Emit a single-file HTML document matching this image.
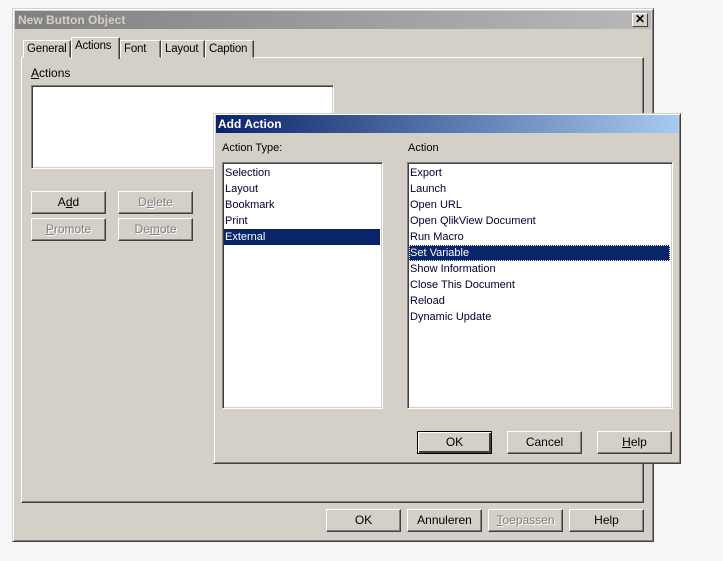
<!DOCTYPE html>
<html><head><meta charset="utf-8"><style>
*{box-sizing:border-box;margin:0;padding:0}
body{width:723px;height:561px;background:#f6f6f6;position:relative;overflow:hidden;font-family:"Liberation Sans",sans-serif;font-size:11px;color:#000}
.a{position:absolute}
.win{background:#d4d0c8;border:1px solid;border-color:#d4d0c8 #404040 #404040 #d4d0c8;box-shadow:inset 1px 1px #fff,inset -1px -1px #808080}
.btn{position:absolute;background:#d4d0c8;border:1px solid;border-color:#fff #404040 #404040 #fff;box-shadow:inset -1px -1px #808080;text-align:center;line-height:20px;height:23px;width:75px}
.dis{color:#808080;text-shadow:1px 1px #fff}
.list{position:absolute;background:#fff;border:1px solid;border-color:#808080 #fff #fff #808080;box-shadow:inset 1px 1px #404040,inset -1px -1px #d4d0c8}
.list div{height:16px;line-height:16px;padding-left:1px;color:#000033}
.sel{background:#0a246a;color:#fff!important}
.tab{position:absolute;top:40px;height:18px;background:#d4d0c8;border:1px solid;border-color:#fff #404040 transparent #fff;box-shadow:inset -1px 0 #808080;padding:2px 0 0 3px;font-size:11.5px;white-space:nowrap;overflow:hidden;letter-spacing:-0.2px}
u{text-decoration:underline}
</style></head><body>
<div class="a win" style="left:12px;top:8px;width:642px;height:534px"></div>
<div class="a" style="left:15px;top:11px;width:636px;height:18px;background:linear-gradient(90deg,#808080,#b8b8b8)"></div>
<div class="a" style="left:18px;top:12px;color:#d4d0c8;font-weight:bold;font-size:12px;line-height:16px">New Button Object</div>
<div class="a" style="left:632px;top:13px;width:16px;height:14px;background:#d4d0c8;border:1px solid;border-color:#fff #404040 #404040 #fff;text-align:center;line-height:11px;font-weight:bold;font-size:12px">✕</div>
<div class="a" style="left:21px;top:57px;width:623px;height:446px;border:1px solid;border-color:#fff #404040 #404040 #fff;box-shadow:inset -1px -1px #808080"></div>
<div class="tab" style="left:23px;width:48px">General</div>
<div class="tab" style="left:120px;width:41px">Font</div>
<div class="tab" style="left:161px;width:44px">Layout</div>
<div class="tab" style="left:205px;width:49px">Caption</div>
<div class="tab" style="left:71px;top:37px;height:22px;width:49px;border-bottom:none;z-index:2">Actions</div>
<div class="a" style="left:31px;top:66px;font-size:12px"><u>A</u>ctions</div>
<div class="list" style="left:31px;top:85px;width:303px;height:84px"></div>
<div class="btn" style="left:31px;top:191px"><span style="font-size:12px">A<u>d</u>d</span></div>
<div class="btn dis" style="left:118px;top:191px;font-size:12px">D<u>e</u>lete</div>
<div class="btn dis" style="left:31px;top:218px;font-size:12px"><u>P</u>romote</div>
<div class="btn dis" style="left:118px;top:218px;font-size:12px">De<u>m</u>ote</div>
<div class="btn" style="left:326px;top:509px;font-size:12px">OK</div>
<div class="btn" style="left:407px;top:509px;font-size:12px">Annuleren</div>
<div class="btn dis" style="left:488px;top:509px;font-size:12px"><u>T</u>oepassen</div>
<div class="btn" style="left:569px;top:509px;font-size:12px">Help</div>

<div class="a win" style="left:213px;top:113px;width:468px;height:351px"></div>
<div class="a" style="left:216px;top:115px;width:462px;height:18px;background:linear-gradient(90deg,#0a246a,#a6caf0)"></div>
<div class="a" style="left:218px;top:116px;color:#fff;font-weight:bold;font-size:12px;line-height:16px">Add Action</div>
<div class="a" style="left:222px;top:142px">Action Type:</div>
<div class="a" style="left:408px;top:142px">Action</div>
<div class="list" style="left:222px;top:162px;width:161px;height:247px;padding:2px 2px 2px 1px">
<div>Selection</div><div>Layout</div><div>Bookmark</div><div>Print</div><div class="sel">External</div></div>
<div class="list" style="left:407px;top:162px;width:266px;height:247px;padding:2px 2px 2px 1px">
<div>Export</div><div>Launch</div><div>Open URL</div><div>Open QlikView Document</div><div>Run Macro</div><div class="sel" style="outline:1px dotted #fff;outline-offset:-1px">Set Variable</div><div>Show Information</div><div>Close This Document</div><div>Reload</div><div>Dynamic Update</div></div>
<div class="btn" style="left:417px;top:431px;font-size:12px;border:1px solid #000;box-shadow:inset 1px 1px #fff,inset -2px -2px #404040">OK</div>
<div class="btn" style="left:507px;top:431px;font-size:12px">Cancel</div>
<div class="btn" style="left:597px;top:431px;font-size:12px"><u>H</u>elp</div>
</body></html>
